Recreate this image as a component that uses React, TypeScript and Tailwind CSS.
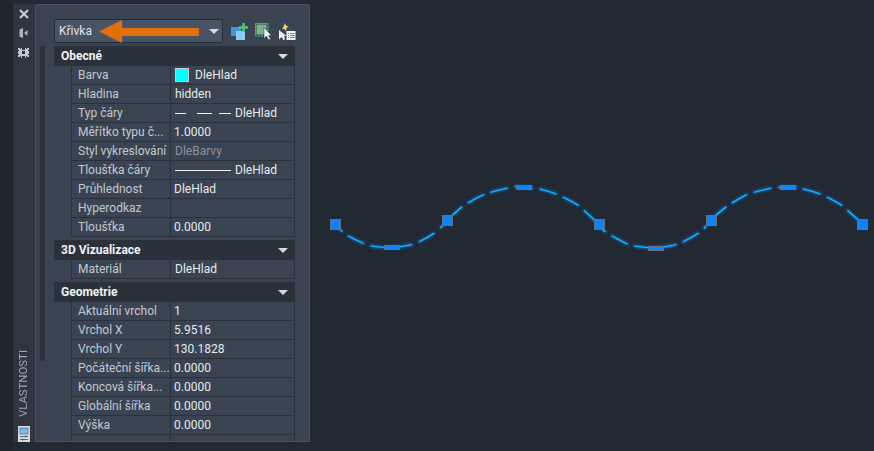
const dashes = [
  "M340.7 230L342 231.3",
  "M348.3 236Q356 240 363.3 243.3",
  "M371 246Q391 249.5 411.7 244.7",
  "M419.3 241.7Q427 238 434 233.3",
  "M440.7 227.7L442.7 225.7",
  "M452.7 215L461.7 207",
  "M468.3 202.7Q476 198 483.7 194.7",
  "M491 192.3Q499 190 507.3 188.3",
  "M515.3 186.6Q524 186 532 188.3",
  "M540 189Q548 191 556 194",
  "M563.3 197.3Q571 201 578.3 205.3",
  "M584.3 210.7L595 220.7",
  "M603 230L605.3 231.6",
  "M612 236Q620 240.5 627.3 244",
  "M634.7 246Q655 250 676 244.7",
  "M683.3 241.7Q691 238 698.3 233.3",
  "M704.3 228.3L706 226",
  "M716 215L726 207",
  "M732.3 202.7Q740 198 746.7 194.7",
  "M754.3 192.3Q762 190 770.7 188.3",
  "M778.7 187.3Q787 186.5 796 187.3",
  "M803.3 189Q812 191 820 194",
  "M827.3 197.3Q835 201 841.7 205.3",
  "M847.7 210.7L858.3 220",
];

const grips: [number, number, number, number][] = [
  [330, 219, 11, 11],
  [442, 215, 11, 11],
  [594, 219, 11, 11],
  [706, 215, 11, 11],
  [857, 219, 11, 11],
  [384, 245, 16, 5],
  [516, 185, 16, 5],
  [648, 246, 16, 5],
  [780, 185, 16, 5],
];

function Caret() {
  return (
    <svg width="10" height="5" viewBox="0 0 10 5" className="shrink-0">
      <path d="M0 0H10L5 5Z" fill="#d6d8dc" />
    </svg>
  );
}

function Row({ label, children, muted }: { label: string; children?: React.ReactNode; muted?: boolean }) {
  return (
    <div className="flex h-[19px] border-b border-[#2b313b]">
      <div className="flex w-[100px] shrink-0 items-center truncate border-r border-l border-[#2b313b] pl-[6px] text-[#c4c9d0]">{label}</div>
      <div className={`flex flex-1 items-center border-r border-[#2b313b] pl-[3px] ${muted ? "text-[#8d939c]" : "text-[#e8eaec]"}`}>{children}</div>
    </div>
  );
}

function Header({ title }: { title: string }) {
  return (
    <div className="-ml-[17px] flex h-[20px] items-center justify-between bg-[#2b313b] pr-[7px] pl-[7px] font-bold text-[#f0f1f2]">
      <span>{title}</span>
      <Caret />
    </div>
  );
}

export default function App() {
  return (
    <div className="flex h-[451px] w-[874px] overflow-hidden bg-[#222932] text-[12px] leading-none [font-family:Roboto,sans-serif]">
      <div className="w-[13px] shrink-0 bg-[#1f262e]" />
      <div className="mt-[4px] flex h-[438px] w-[297px] shrink-0 bg-[#2f3641]">
        <div className="flex w-[22px] shrink-0 flex-col items-center pt-[3px]">
          <svg width="10" height="10" viewBox="0 0 10 10" className="mt-[2px] mr-[1px]">
            <path d="M1 1L9 9M9 1L1 9" stroke="#c9ccd1" strokeWidth="2.2" />
          </svg>
          <svg width="9" height="10" viewBox="0 0 9 10" className="mt-[9px] mr-[1px]">
            <path d="M0.5 1.5L4 0V10L0.5 8.5Z" fill="#aeb2b9" />
            <path d="M8.5 2V8L5 5Z" fill="#aeb2b9" />
          </svg>
          <svg width="11" height="11" viewBox="0 0 11 11" className="mt-[9px] mr-[1px]">
            <path d="M0 1h2v1h1V1h1v2h3V1h1v1h1V1h2v2h-1v1h1v3h-1v1h1v2H9V9H8v2H7V9H4v2H3V9H2v1H0V8h1V7H0V4h1V3H0ZM4 4v3h3V4Z" fill="#c4c7cd" />
          </svg>
          <div className="mt-auto mr-[1px] mb-[9px] rotate-180 text-[11.4px] text-[#99a9c0] [writing-mode:vertical-rl]">VLASTNOSTI</div>
          <svg width="12" height="16" viewBox="0 0 12 16" className="mr-[1px]">
            <rect width="12" height="16" fill="#d8dadd" />
            <rect x="2" y="2" width="8" height="6" fill="#6dbcf5" stroke="#4a5a6c" strokeWidth="0.6" />
            <path d="M2 10.5H10M2 13.5H10" stroke="#5a6270" />
            <path d="M7.5 9.5V11.5M4.5 12.5V14.5" stroke="#5a6270" />
          </svg>
        </div>
        <div className="flex min-w-0 flex-1 rounded-t-[3px] border border-[#4a5261] bg-[#3a4351] pt-[14px]">
          <div className="mt-[27px] ml-[4px] h-[315px] w-[5px] shrink-0 rounded-b-[3px] bg-[#2b313b]" />
          <div className="ml-[9px] flex min-w-0 flex-1 flex-col overflow-hidden pr-[12px]">
            <div className="-mr-[3px] flex items-center">
              <div className="flex h-[24px] w-[169px] shrink-0 items-center justify-between rounded-[2px] border border-[#262c35] bg-[#485365] pr-[3px] pl-[4px] text-[#e2e4e7]">
                <span>Křivka</span>
                <Caret />
              </div>
              <svg width="17" height="17" viewBox="0 0 17 17" className="ml-[8px] shrink-0">
                <rect x="0" y="4" width="10" height="9" fill="#3f95de" />
                <rect x="5" y="8" width="9" height="9" fill="#8ccbf7" />
                <path d="M8 4.5H17M12.5 0V9" stroke="#4cc870" strokeWidth="2.6" />
              </svg>
              <svg width="17" height="17" viewBox="0 0 17 17" className="ml-[7px] shrink-0">
                <rect x="1.5" y="1.5" width="10" height="10" fill="#6fb98a" />
                <rect x="0.5" y="0.5" width="12.5" height="12.5" fill="none" stroke="#4fd47c" strokeDasharray="2 1" />
                <path d="M9 4.5V15.5L11.5 13L13.5 17L15.5 16L13.5 12.5H16.5Z" fill="#f2f3f5" stroke="#2b313b" strokeWidth="0.5" />
              </svg>
              <svg width="17" height="17" viewBox="0 0 17 17" className="ml-[7px] shrink-0">
                <path d="M6 0L7 2.5L9.5 3.5L7.5 5L7 8L5 6L3 6L4.5 3.5Z" fill="#f3cb6b" />
                <path d="M0 7V16.5L2.5 14L4.5 17L6 16.5L5 13H7.5Z" fill="#f2f3f5" />
                <rect x="7.5" y="8" width="9" height="9" fill="#f2f3f5" />
                <path d="M9 10.5h1M9 12.5h1M9 14.5h1M11 10.5h4.5M11 12.5h4.5M11 14.5h4.5" stroke="#3d8fd6" />
              </svg>
            </div>
            <div className="mt-[3px] flex flex-col pl-[17px] pr-[2px]">
              <Header title="Obecné" />
              <Row label="Barva">
                <span className="mr-[6px] ml-px h-[14px] w-[14px] border border-[#c8cdd3] bg-[#00ffff]" />
                DleHlad
              </Row>
              <Row label="Hladina"><span className="ml-px">hidden</span></Row>
              <Row label="Typ čáry">
                <svg width="60" height="3" viewBox="0 0 60 3" className="ml-px">
                  <path d="M0 1.5H11M22 1.5H37M44 1.5H56" stroke="#f0f0f0" />
                </svg>
                DleHlad
              </Row>
              <Row label="Měřítko typu č...">1.0000</Row>
              <Row label="Styl vykreslování" muted><span className="ml-px">DleBarvy</span></Row>
              <Row label="Tloušťka čáry">
                <svg width="60" height="3" viewBox="0 0 60 3" className="ml-px">
                  <path d="M0 1.5H56" stroke="#f0f0f0" />
                </svg>
                DleHlad
              </Row>
              <Row label="Průhlednost">DleHlad</Row>
              <Row label="Hyperodkaz" />
              <Row label="Tloušťka">0.0000</Row>
              <div className="h-[3px]" />
              <Header title="3D Vizualizace" />
              <Row label="Materiál"><span className="ml-px">DleHlad</span></Row>
              <div className="h-[3px]" />
              <Header title="Geometrie" />
              <Row label="Aktuální vrchol">1</Row>
              <Row label="Vrchol X">5.9516</Row>
              <Row label="Vrchol Y">130.1828</Row>
              <Row label="Počáteční šířka...">0.0000</Row>
              <Row label="Koncová šířka...">0.0000</Row>
              <Row label="Globální šířka">0.0000</Row>
              <Row label="Výška">0.0000</Row>
              <Row label="" />
            </div>
          </div>
        </div>
      </div>
      <div className="relative min-w-0 flex-1">
        <svg viewBox="310 0 564 451" className="h-full w-full">
          <defs>
            <filter id="glow" x="-5%" y="-20%" width="110%" height="140%">
              <feGaussianBlur stdDeviation="1" />
            </filter>
          </defs>
          <g fill="none" strokeLinecap="round">
            <g stroke="#0c66c4" strokeWidth="3" filter="url(#glow)">
              {dashes.map((d) => <path key={d} d={d} />)}
            </g>
            <g stroke="#18c8ff" strokeWidth="1.1">
              {dashes.map((d) => <path key={d} d={d} />)}
            </g>
          </g>
          {grips.map(([x, y, w, h]) => (
            <rect key={x} x={x + 0.5} y={y + 0.5} width={w - 1} height={h - 1} fill="#0a84ff" stroke="#6a6f76" />
          ))}
        </svg>
      </div>
      <svg width="102" height="25" viewBox="0 0 102 25" className="absolute top-[19px] left-[98px]">
        <path d="M1 12.5L24 1V9H101V17H24V24Z" fill="#e26f0a" />
      </svg>
    </div>
  );
}
